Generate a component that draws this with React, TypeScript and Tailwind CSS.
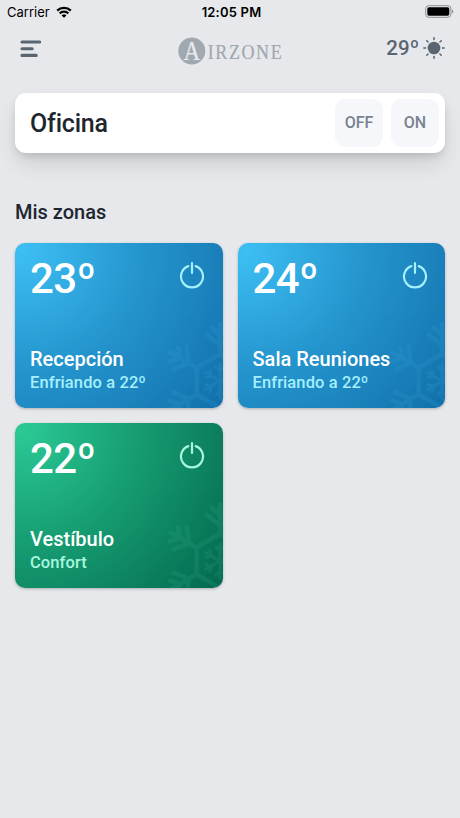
import React from 'react';

interface Zone {
  name: string;
  temperature: number;
  status: string;
  background: string;
  accent: string;
  flake: string;
}

const BLUE = 'bg-[radial-gradient(circle_at_8px_8px,#3dbff3_0px,#2494cd_120px,#1371ac_250px)]';
const GREEN = 'bg-[radial-gradient(circle_at_8px_8px,#2bc995_0px,#159a70_120px,#056a51_250px)]';

const ZONES: Zone[] = [
  { name: 'Recepción', temperature: 23, status: 'Enfriando a 22º', background: BLUE, accent: 'text-[#a5f0fd]', flake: 'text-[#38a6dc]' },
  { name: 'Sala Reuniones', temperature: 24, status: 'Enfriando a 22º', background: BLUE, accent: 'text-[#a5f0fd]', flake: 'text-[#38a6dc]' },
  { name: 'Vestíbulo', temperature: 22, status: 'Confort', background: GREEN, accent: 'text-[#a9f8de]', flake: 'text-[#38b48c]' },
];

const ANGLES = [0, 60, 120, 180, 240, 300];
const RAYS = [0, 45, 90, 135, 180, 225, 270, 315];

const StatusBar: React.FC = () => (
  <div className="grid h-6 grid-cols-3 items-center pl-[7px] pr-[6px] font-[Inter,sans-serif] text-black">
    <div className="flex items-center gap-[6px]">
      <span className="text-[13px] leading-none">Carrier</span>
      <svg width="16" height="12" viewBox="0 0 16 12" fill="none" stroke="currentColor" strokeWidth="2.3">
        <path d="M1.2 4.6a9.8 9.8 0 0 1 13.6 0" />
        <path d="M3.7 7.4a6.2 6.2 0 0 1 8.6 0" />
        <path d="M8 11.8 5.6 9.4a3.5 3.5 0 0 1 4.8 0z" fill="currentColor" stroke="none" />
      </svg>
    </div>
    <span className="ml-[2px] text-center text-[13px] font-semibold leading-none tracking-[0.2px]">12:05 PM</span>
    <svg className="mb-px justify-self-end" width="29" height="13" viewBox="0 0 29 13">
      <rect x="0.7" y="0.7" width="25.2" height="11.6" rx="3" fill="none" stroke="#8d8f93" strokeWidth="1" />
      <rect x="2.3" y="2.3" width="22" height="8.4" rx="1.6" fill="#000" />
      <path d="M27 4.4c1.8.7 1.8 3.5 0 4.2z" fill="#8d8f93" />
    </svg>
  </div>
);

const Logo: React.FC = () => (
  <svg width="106" height="40" viewBox="0 -6 106 40" fontFamily="'Liberation Serif', serif">
    <circle cx="13.8" cy="14" r="13.5" fill="#a0a8b0" />
    <text transform="translate(13.8 22.5) scale(0.86 1)" textAnchor="middle" fontSize="27" fill="#e9ebef" stroke="#e9ebef" strokeWidth="0.2">
      A
    </text>
    <text transform="translate(29.8 22) scale(0.84 1)" textLength="88" fontSize="21.5" fill="#a0a8af" stroke="#a0a8af" strokeWidth="0.2">
      IRZONE
    </text>
  </svg>
);

const Header: React.FC = () => (
  <header className="grid h-[54px] grid-cols-3 items-start pl-5 pr-[14px] pt-[12px] text-[#596570]">
    <svg className="mt-[3px]" width="22" height="20" viewBox="0 0 22 20" stroke="currentColor" strokeWidth="3.1" strokeLinecap="round">
      <path d="M2 3h17.7M2 9.7h10.2M2 16.4h14.2" />
    </svg>
    <div className="ml-[-5px] -mt-[5px] flex justify-center">
      <Logo />
    </div>
    <div className="flex items-center justify-end gap-[3px]">
      <span className="text-[20.5px] font-medium leading-6">29º</span>
      <svg width="24" height="24" viewBox="-12 -12 24 24">
        <circle r="6.3" fill="currentColor" />
        {RAYS.map((angle) => (
          <path key={angle} d="M0-8.4v-1.8" transform={`rotate(${angle})`} stroke="currentColor" strokeWidth="1.5" strokeLinecap="round" />
        ))}
      </svg>
    </div>
  </header>
);

const PowerIcon: React.FC<{ className: string }> = ({ className }) => (
  <svg className={className} width="26" height="28" viewBox="0 0 26 28" fill="none" stroke="currentColor" strokeWidth="2.2" strokeLinecap="round">
    <path d="M9.3 5.1a11 11 0 1 0 7.4 0" />
    <path d="M13 2v10" />
  </svg>
);

const Snowflake: React.FC<{ className: string }> = ({ className }) => (
  <svg
    className={`absolute -bottom-[33px] -right-[57px] opacity-[0.17] ${className}`}
    width="120"
    height="120"
    viewBox="-60 -60 120 120"
    fill="none"
    stroke="currentColor"
    strokeWidth="4.6"
    strokeLinecap="round"
  >
    {ANGLES.map((angle) => (
      <g key={angle} transform={`rotate(${angle})`}>
        <path d="M23.4-13.5 0-27V-57M-8-53 0-46 8-53M-13-46 0-36 13-46" />
        <path d="M0 0V-17M-4-14 0-10 4-14" strokeWidth="3" />
      </g>
    ))}
  </svg>
);

const ZoneCard: React.FC<{ zone: Zone }> = ({ zone }) => (
  <div className={`relative flex h-[165px] flex-col justify-between overflow-hidden rounded-[10px] px-[15px] pb-[13px] pt-[14px] shadow-[0_1px_3px_rgba(0,0,0,0.25)] ${zone.background}`}>
    <Snowflake className={zone.flake} />
    <div className="relative flex items-start justify-between">
      <span className="pt-px text-[42px] font-medium leading-[42px] tracking-[-0.5px] text-white">{zone.temperature}º</span>
      <PowerIcon className={`mr-[2.5px] mt-[3.5px] ${zone.accent}`} />
    </div>
    <div className="relative">
      <h3 className="text-[20px] font-medium leading-6 text-white">{zone.name}</h3>
      <p className={`text-[16.5px] font-medium leading-6 tracking-[0.1px] ${zone.accent}`}>{zone.status}</p>
    </div>
  </div>
);

const App: React.FC = () => {
  return (
    <div className="h-[818px] w-full overflow-hidden bg-[#e6e8ec] font-[Roboto,sans-serif] text-[#20262e]">
      <StatusBar />
      <Header />
      <main className="px-[15px] pt-[15px]">
        <section className="flex h-[60px] items-center justify-between rounded-[11px] bg-white pl-[15px] pr-[6px] shadow-[0_12px_22px_-3px_rgba(0,0,0,0.13),0_4px_8px_-2px_rgba(0,0,0,0.14)]">
          <h1 className="text-[25px] font-medium leading-none tracking-[-0.2px]">Oficina</h1>
          <div className="flex gap-2 text-[16px] font-medium text-[#79838f]">
            <button className="h-12 w-12 rounded-[11px] bg-[#f5f7fb]">OFF</button>
            <button className="h-12 w-12 rounded-[11px] bg-[#f5f7fb]">ON</button>
          </div>
        </section>

        <h2 className="mt-[47px] text-[20px] font-medium leading-6">Mis zonas</h2>
        <div className="mt-[19px] grid grid-cols-2 gap-[15px]">
          {ZONES.map((zone) => (
            <ZoneCard key={zone.name} zone={zone} />
          ))}
        </div>
      </main>
    </div>
  );
};

export default App;
